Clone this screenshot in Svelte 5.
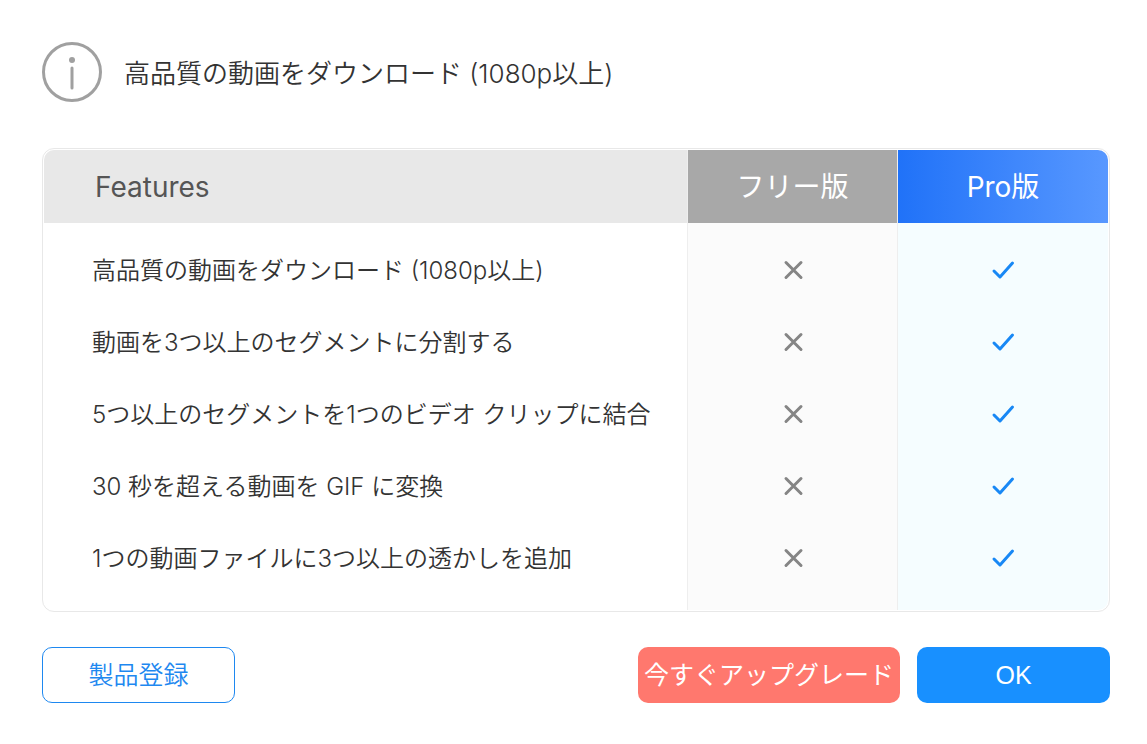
<script>
  const title = '高品質の動画をダウンロード (1080p以上)';

  const features = [
    { name: '高品質の動画をダウンロード (1080p以上)', free: false, pro: true },
    { name: '動画を3つ以上のセグメントに分割する', free: false, pro: true },
    { name: '5つ以上のセグメントを1つのビデオ クリップに結合', free: false, pro: true },
    { name: '30 秒を超える動画を GIF に変換', free: false, pro: true },
    { name: '1つの動画ファイルに3つ以上の透かしを追加', free: false, pro: true },
  ];
</script>

{#snippet mark(on)}
  {#if on}
    <svg class="mark yes" width="24" height="24" viewBox="0 0 24 24" role="img" aria-label="Yes">
      <path d="M3 13l6 6L21.5 5" />
    </svg>
  {:else}
    <svg class="mark" width="24" height="24" viewBox="0 0 24 24" role="img" aria-label="No">
      <path d="M5 4.5l15 15M20 4.5l-15 15" />
    </svg>
  {/if}
{/snippet}

<main class="dialog">
  <header class="header">
    <svg class="info" width="60" height="60" viewBox="0 0 60 60" aria-hidden="true">
      <circle cx="30" cy="30" r="28.5" />
      <circle class="dot" cx="30" cy="18" r="3" />
      <path d="M30 26v20" />
    </svg>
    <h1>{title}</h1>
  </header>

  <div class="card">
    <table>
      <thead>
        <tr>
          <th class="name" scope="col">Features</th>
          <th class="free" scope="col">フリー版</th>
          <th class="pro" scope="col">Pro版</th>
        </tr>
      </thead>
      <tbody>
        {#each features as feature}
          <tr>
            <td class="name">{feature.name}</td>
            <td class="free">{@render mark(feature.free)}</td>
            <td class="pro">{@render mark(feature.pro)}</td>
          </tr>
        {/each}
      </tbody>
    </table>
  </div>

  <footer class="footer">
    <button class="btn outline">製品登録</button>
    <div class="actions">
      <button class="btn upgrade">今すぐアップグレード</button>
      <button class="btn primary">OK</button>
    </div>
  </footer>
</main>

<style>
  :global(body) {
    margin: 0;
    background: #fff;
  }

  .dialog {
    padding: 42px 37px 40px 42px;
    color: #333;
    font-family: Inter, "Noto Sans CJK JP", sans-serif;
  }

  .header {
    display: flex;
    align-items: center;
    gap: 22px;
    margin-bottom: 46px;
  }

  .info {
    flex: none;
    fill: none;
    stroke: #a0a0a0;
    stroke-width: 3;
    stroke-linecap: round;
  }

  .info .dot {
    fill: #a0a0a0;
    stroke: none;
  }

  h1 {
    margin: 0;
    padding-top: 4px;
    font-size: 26px;
    line-height: 36px;
    font-weight: 350;
  }

  .card {
    padding: 1px;
    border: 1px solid #e8e8e8;
    border-radius: 12px;
    overflow: hidden;
  }

  table {
    width: 100%;
    border-collapse: separate;
    border-spacing: 0;
    table-layout: fixed;
    border-radius: 10px;
    overflow: hidden;
  }

  th {
    box-sizing: border-box;
    height: 73px;
    padding: 0;
    font-size: 28px;
    line-height: 36px;
    font-weight: 400;
    color: #fff;
  }

  td {
    box-sizing: border-box;
    height: 72px;
    padding: 0;
    font-size: 24px;
    line-height: 36px;
    font-weight: 350;
  }

  tbody tr:first-child td {
    height: 84px;
    padding-top: 12px;
  }

  tbody tr:last-child td {
    height: 87px;
    padding-bottom: 15px;
  }

  .name {
    padding-left: 48px;
    text-align: left;
    white-space: nowrap;
  }

  th.name {
    padding-left: 51px;
    background: #e8e8e8;
    color: #555;
  }

  .free,
  .pro {
    width: 211px;
    border-left: 1px solid #eee;
    text-align: center;
  }

  .free {
    width: 210px;
  }

  td.free {
    background: #fbfbfb;
  }

  td.pro {
    background: #f5fdff;
  }

  th.free {
    background: #a8a8a8;
  }

  th.pro {
    background: linear-gradient(90deg, #2072f8, #5898ff);
  }

  .mark {
    display: block;
    margin: 0 auto 2px;
    fill: none;
    stroke: #858585;
    stroke-width: 3;
    stroke-linecap: round;
    stroke-linejoin: round;
  }

  .mark.yes {
    stroke: #1888f5;
  }

  .footer {
    display: flex;
    justify-content: space-between;
    margin-top: 35px;
  }

  .actions {
    display: flex;
    gap: 17px;
  }

  .btn {
    box-sizing: border-box;
    min-width: 193px;
    height: 56px;
    padding: 0 6px;
    border: 0;
    border-radius: 10px;
    font-family: "Liberation Sans", "Noto Sans CJK JP", sans-serif;
    font-size: 25px;
    line-height: 36px;
    color: #fff;
    cursor: pointer;
  }

  .outline {
    border: 1px solid #1e88f0;
    background: #fff;
    color: #1e88f0;
    font-weight: 350;
  }

  .upgrade {
    background: #ff786e;
  }

  .primary {
    background: #1890ff;
  }
</style>
